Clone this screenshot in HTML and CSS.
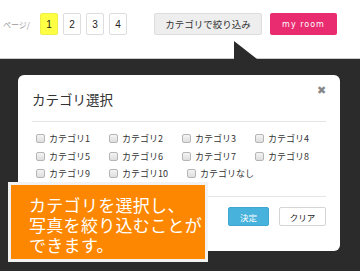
FILE: index.html
```html
<!DOCTYPE html>
<html lang="ja">
<head>
  <meta charset="UTF-8" />
  <meta name="viewport" content="width=device-width, initial-scale=1.0"/>
  <title>カテゴリ選択</title>
  <link rel="stylesheet" href="styles.css">
</head>
<body>

<div class="topbar">
  <div class="pager">
    <span class="pager-label">ページ/</span>
    <a class="page current">1</a>
    <a class="page">2</a>
    <a class="page">3</a>
    <a class="page">4</a>
  </div>
  <div class="actions">
    <button type="button" class="filter-btn">カテゴリで絞り込み</button>
    <button type="button" class="room-btn">my room</button>
  </div>
  <span class="pointer"></span>
</div>

<div class="overlay">
  <div class="modal">
    <div class="modal-head">
      <h2>カテゴリ選択</h2>
      <span class="close">&#x2716;</span>
    </div>

    <div class="modal-body">
      <label class="cat"><input type="checkbox"> カテゴリ1</label>
      <label class="cat"><input type="checkbox"> カテゴリ2</label>
      <label class="cat"><input type="checkbox"> カテゴリ3</label>
      <label class="cat"><input type="checkbox"> カテゴリ4</label>
      <label class="cat"><input type="checkbox"> カテゴリ5</label>
      <label class="cat"><input type="checkbox"> カテゴリ6</label>
      <label class="cat"><input type="checkbox"> カテゴリ7</label>
      <label class="cat"><input type="checkbox"> カテゴリ8</label>
      <label class="cat"><input type="checkbox"> カテゴリ9</label>
      <label class="cat"><input type="checkbox"> カテゴリ10</label>
      <label class="cat cat-none"><input type="checkbox"> カテゴリなし</label>
    </div>

    <div class="modal-foot">
      <button type="button" class="ok-btn">決定</button>
      <button type="button" class="clear-btn">クリア</button>
    </div>
  </div>

  <!-- help balloon over the dialog -->
  <div class="callout">
    <p>カテゴリを選択し、</p>
    <p>写真を絞り込むことが</p>
    <p>できます。</p>
  </div>
</div>

</body>
</html>
```

FILE: styles.css
```css
body {
  margin: 0;
  width: 360px;
  height: 271px;
  overflow: hidden;
  background: #2b2b2b;
  font-family: "Noto Sans CJK JP", "Noto Sans", sans-serif;
  color: #333;
}
.topbar {
  position: relative;
  height: 59px;
  box-sizing: border-box;
  background: white;
  border-bottom: 1px solid #ccc;
  display: flex;
  justify-content: space-between;
  align-items: flex-start;
  padding: 13px 23px 0 3px;
}
.pager {
  display: flex;
  align-items: center;
  gap: 5px;
}
.pager-label {
  font-size: 8px;
  color: #999;
  width: 32px;
}
.page {
  width: 18px;
  height: 22px;
  box-sizing: border-box;
  border: 1px solid #ddd;
  border-radius: 2px;
  background: white;
  font-family: "Liberation Sans", sans-serif;
  font-size: 10px;
  color: #222;
  display: flex;
  align-items: center;
  justify-content: center;
}
.page.current {
  background: #ffff44;
  border-color: #eeee44;
}
.actions {
  display: flex;
  gap: 8px;
}
.actions button {
  height: 22px;
  border-radius: 2px;
  cursor: pointer;
}
.filter-btn {
  width: 108px;
  background: #eee;
  border: 1px solid #ddd;
  color: #333;
  font-family: inherit;
  font-size: 9.5px;
  padding: 0;
}
.room-btn {
  width: 67px;
  background: #e92b6f;
  border: none;
  color: white;
  font-family: "DejaVu Sans", sans-serif;
  font-size: 8px;
  letter-spacing: 1px;
}
.pointer {
  position: absolute;
  left: 234px;
  bottom: -1px;
  width: 23px;
  height: 18px;
  background: #2b2b2b;
  clip-path: polygon(0 0, 100% 100%, 0 100%);
}

.overlay {
  position: relative;
  padding: 16px 20px 0 18px;
}
.modal {
  width: 322px;
  height: 176px;
  box-sizing: border-box;
  background: white;
  border-radius: 6px;
  padding: 0 14px;
}
.modal-head {
  position: relative;
  height: 46px;
  display: flex;
  align-items: center;
  border-bottom: 1px solid #e5e5e5;
}
.modal-head h2 {
  margin: 0;
  padding-top: 2px;
  font-size: 13.5px;
  font-weight: normal;
  color: #333;
}
.close {
  position: absolute;
  right: 0;
  top: 6px;
  font-size: 11px;
  color: #888;
}
.modal-body {
  display: grid;
  grid-template-columns: repeat(4, 73px);
  grid-auto-rows: 17.5px;
  padding: 8px 0 14px 4px;
  height: 52px;
}
.cat {
  display: flex;
  align-items: center;
  gap: 4px;
  font-size: 9px;
  color: #333;
  white-space: nowrap;
}
.cat-none {
  margin-left: 5px;
}
.cat input {
  appearance: none;
  width: 9px;
  height: 9px;
  margin: 0;
  border: 1px solid #b5b5b5;
  border-radius: 2px;
  background: linear-gradient(#f4f4f4, #dedede);
}
.modal-foot {
  border-top: 1px solid #e5e5e5;
  display: flex;
  justify-content: flex-end;
  gap: 10px;
  padding-top: 10px;
}
.modal-foot button {
  height: 19px;
  font-family: inherit;
  font-size: 8.5px;
  padding: 0;
  border-radius: 2px;
  cursor: pointer;
}
.ok-btn {
  width: 41px;
  background: #47b2dc;
  border: 1px solid #3ea6d0;
  color: white;
}
.clear-btn {
  width: 47px;
  background: white;
  border: 1px solid #d5d5d5;
  color: #222;
}

.callout {
  position: absolute;
  left: 8px;
  top: 123px;
  width: 200px;
  height: 80px;
  box-sizing: border-box;
  padding: 10px 0 0 18px;
  background: #fd8700;
  border: 3px solid #f2f2f2;
  color: white;
  font-size: 17px;
  white-space: nowrap;
}
.callout p {
  margin: 0;
  height: 20px;
  line-height: 20px;
  letter-spacing: 0.3px;
}
```
